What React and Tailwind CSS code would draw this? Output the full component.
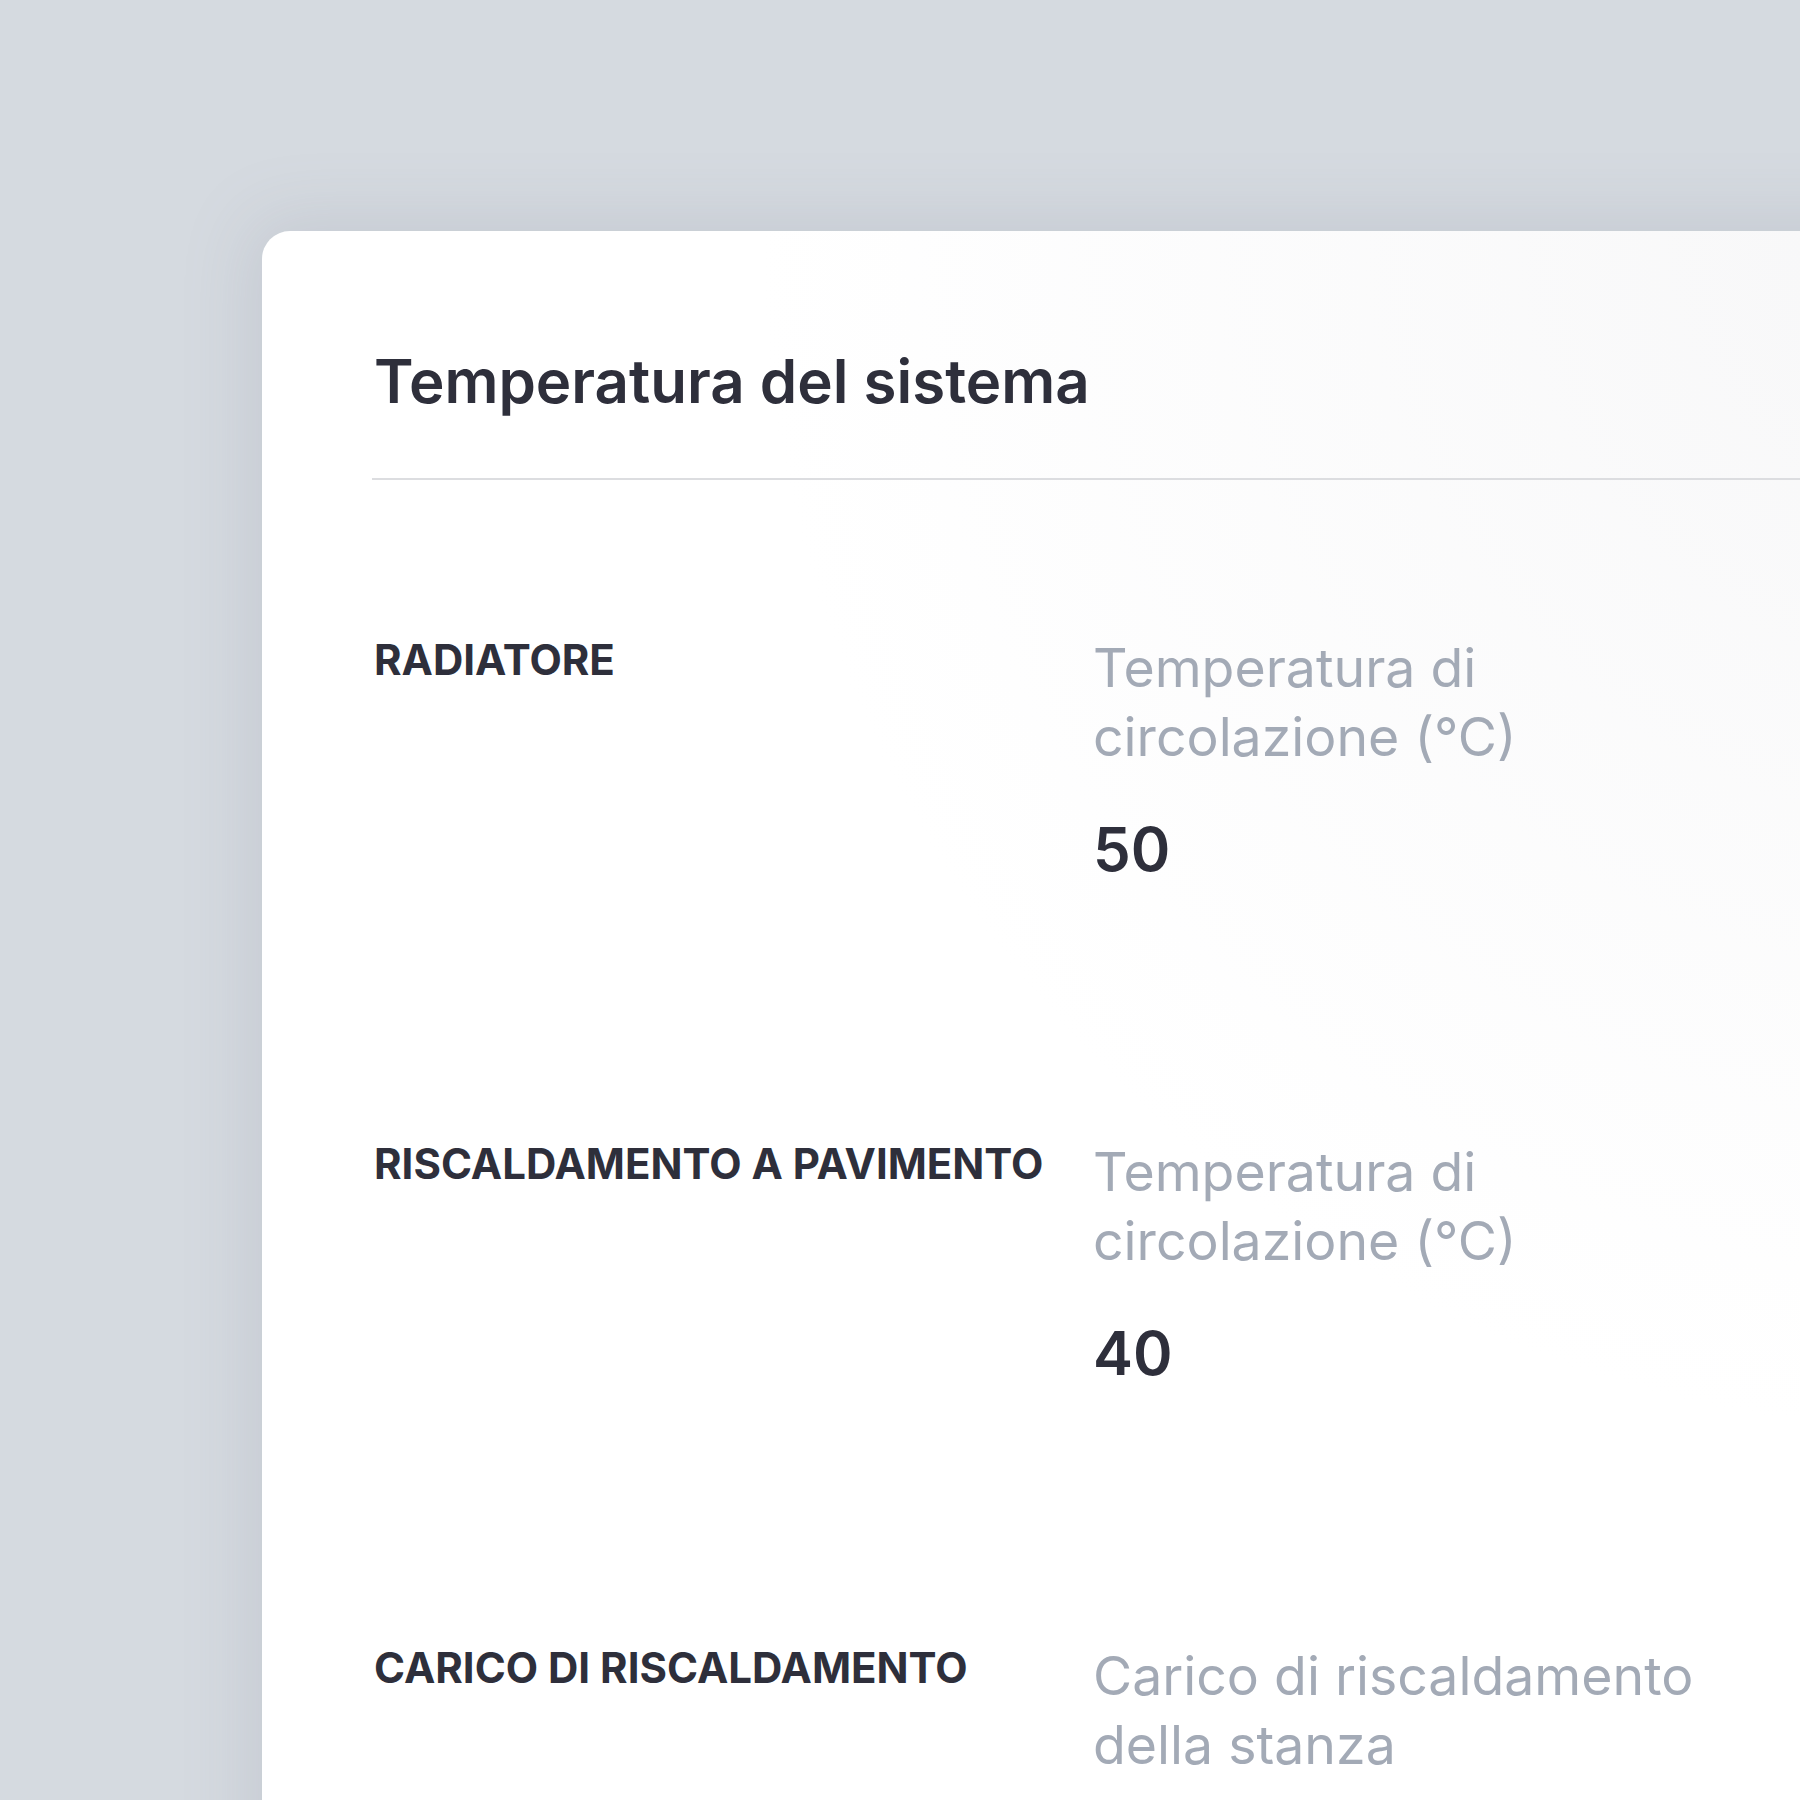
import React from 'react';

// Righe della tabella temperature
const rows = [
  { label: 'RADIATORE', caption: 'Temperatura di circolazione (°C)', value: '50' },
  { label: 'RISCALDAMENTO A PAVIMENTO', caption: 'Temperatura di circolazione (°C)', value: '40' },
  { label: 'CARICO DI RISCALDAMENTO', caption: 'Carico di riscaldamento della stanza', value: '' },
];

const Row = ({ label, caption, value }) => (
  <div className="flex items-start h-[504px]">
    <div className="w-[719px] shrink-0 text-[42px] leading-[53px] font-bold text-[#2e2f3b]">
      {label}
    </div>
    <div className="w-[640px]">
      <p className="text-[53.6px] leading-[69px] text-[#a3aab6]">{caption}</p>
      {value && (
        <p className="mt-[42px] text-[60px] leading-[72px] font-semibold text-[#2e2f3b]">{value}</p>
      )}
    </div>
  </div>
);

export default function App() {
  return (
    <div
      className="w-full h-[1800px] overflow-hidden bg-[#d5dae0]"
      style={{ fontFamily: 'Inter, "Noto Sans", sans-serif' }}
    >
      <div className="ml-[262px] mt-[231px] w-[1700px] h-[1700px] rounded-tl-[28px] bg-[radial-gradient(ellipse_at_top_right,#f7f7f8,#ffffff_50%)] shadow-[-10px_-10px_70px_rgba(120,130,145,0.18)] pl-[110px] pt-[114px]">
        <h1 className="ml-[2px] text-[60px] leading-[72px] font-semibold text-[#2e2f3b]">
          Temperatura del sistema
        </h1>
        <div className="mt-[61px] h-[2px] bg-[#dcdde0]" />
        <div className="pt-[153px] pl-[2px]">
          {rows.map((r) => (
            <Row key={r.label} {...r} />
          ))}
        </div>
      </div>
    </div>
  );
}
